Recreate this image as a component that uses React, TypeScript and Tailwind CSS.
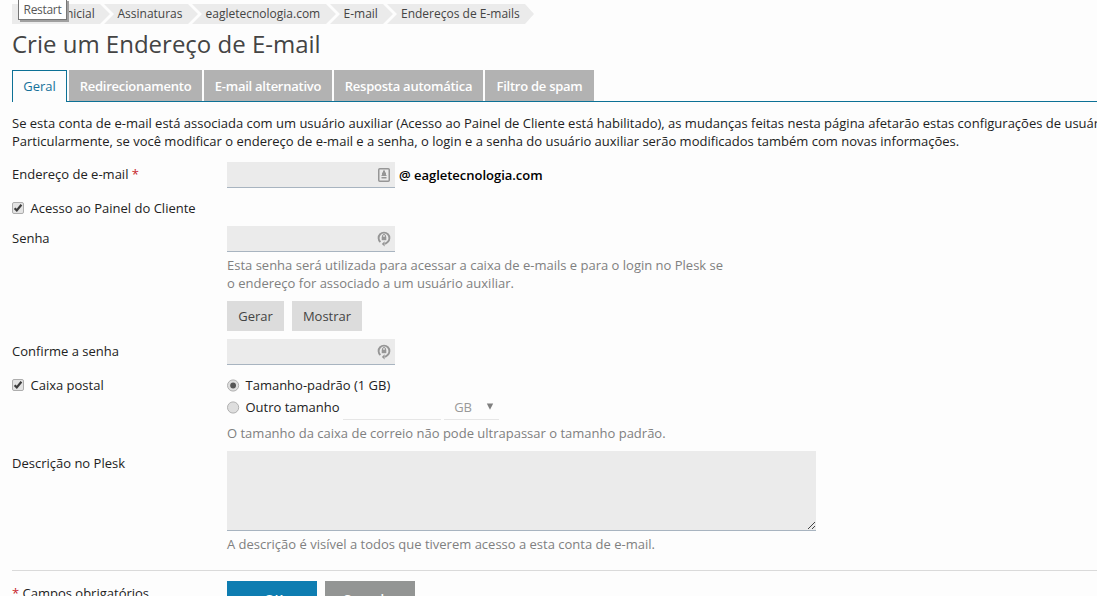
import type { ReactNode } from "react";

function Crumb({ label, className }: { label: string; className: string }) {
  return (
    <li
      className={`h-5 shrink-0 whitespace-nowrap bg-[#ebebeb] text-[12px] leading-5 text-[#444] ${className}`}
    >
      {label}
    </li>
  );
}

function Tab({ label, className }: { label: string; className: string }) {
  return (
    <button
      className={`h-[31px] shrink-0 whitespace-nowrap bg-[#b2b2b2] text-center text-[13px] font-semibold leading-[33px] tracking-[-0.25px] text-white ${className}`}
    >
      {label}
    </button>
  );
}

function Check({ label }: { label: string }) {
  return (
    <label className="flex items-center whitespace-nowrap">
      <svg className="mr-[6.5px]" width="12" height="12" viewBox="0 0 12 12">
        <rect x="0.5" y="0.5" width="11" height="11" rx="1.5" fill="#e3e3e3" stroke="#adadad" />
        <path d="M2.6 6.2 4.8 8.4 9.4 2.8" fill="none" stroke="#3c3c3c" strokeWidth="2.2" />
      </svg>
      {label}
    </label>
  );
}

function Radio({ label, checked }: { label: string; checked?: boolean }) {
  return (
    <label className="flex items-center whitespace-nowrap">
      <svg className="mr-[5.5px]" width="13" height="13" viewBox="0 0 13 13">
        <circle cx="6.1" cy="6.5" r="5.6" fill="#dedede" stroke="#a9a9a9" strokeWidth="0.9" />
        {checked && <circle cx="6.1" cy="6.5" r="2.9" fill="#555" />}
      </svg>
      {label}
    </label>
  );
}

function Field({ children }: { children: ReactNode }) {
  return (
    <div className="flex h-[26px] w-[168px] items-center justify-end border-b border-[#a8b4c0] bg-[#ebebeb] pr-[4px]">
      {children}
    </div>
  );
}

function UserIcon() {
  return (
    <svg width="14" height="16" viewBox="0 0 14 16">
      <rect x="1.75" y="1.75" width="10.5" height="12.5" rx="1" fill="none" stroke="#969696" strokeWidth="1.5" />
      <path d="M6 3.5h2v2H6zM5 5.5h4V8H5zM4.5 8h5v1h-5zM4.5 10h5v1.5h-5z" fill="#969696" />
    </svg>
  );
}

function LockIcon() {
  return (
    <svg width="14" height="17" viewBox="0 0 14 17">
      <path d="M3.4 12A5.4 5.4 0 1 1 10.6 12L8 14" fill="none" stroke="#969696" strokeWidth="1.9" />
      <path d="M7.6 11.3v5.2L4.8 14z" fill="#969696" />
      <path d="M5.5 7V6a1.5 1.5 0 0 1 3 0V7" fill="none" stroke="#969696" strokeWidth="1" />
      <rect x="4.7" y="6.6" width="4.6" height="3.6" fill="#969696" />
    </svg>
  );
}

function Row({ label, className, children }: { label: ReactNode; className: string; children?: ReactNode }) {
  return (
    <div className={`flex items-start ${className}`}>
      <div className="flex h-6 w-[215px] shrink-0 items-center whitespace-nowrap">{label}</div>
      <div>{children}</div>
    </div>
  );
}

export default function App() {
  return (
    <div className="relative h-[596px] w-[1097px] overflow-hidden bg-[#fdfdfd] pl-3 pt-1 font-['Open_Sans',sans-serif] text-[13px] leading-[18px] text-[#222]">
      <ul className="flex h-5">
        <Crumb label="Página Inicial" className="w-[98px] pl-[10px] [clip-path:polygon(0_0,88px_0,100%_50%,88px_100%,0_100%)]" />
        <Crumb label="Assinaturas" className="-ml-[6px] w-[94px] pl-[13.5px] [clip-path:polygon(0_0,84px_0,100%_50%,84px_100%,0_100%,10px_50%)]" />
        <Crumb label="eagletecnologia.com" className="-ml-[6px] w-[144px] pl-[13.5px] [clip-path:polygon(0_0,134px_0,100%_50%,134px_100%,0_100%,10px_50%)]" />
        <Crumb label="E-mail" className="-ml-[6px] w-[63px] pl-[13.5px] [clip-path:polygon(0_0,53px_0,100%_50%,53px_100%,0_100%,10px_50%)]" />
        <Crumb label="Endereços de E-mails" className="-ml-[6px] w-[147px] pl-[14px] [clip-path:polygon(0_0,138px_0,100%_50%,138px_100%,0_100%,10px_50%)]" />
      </ul>

      <h1 className="h-[46px] whitespace-nowrap text-[24px] leading-[39px] text-[#444]">Crie um Endereço de E-mail</h1>

      <nav className="flex h-8 border-b border-[#0d7196]">
        <button className="h-8 w-[55px] border border-b-0 border-[#0d7196] bg-[#fdfdfd] text-center leading-[31px] text-[#16719a]">
          Geral
        </button>
        <Tab label="Redirecionamento" className="ml-[2px] w-[133px]" />
        <Tab label="E-mail alternativo" className="ml-[2px] w-[128px]" />
        <Tab label="Resposta automática" className="ml-[2px] w-[149px]" />
        <Tab label="Filtro de spam" className="ml-[2px] w-[109px]" />
      </nav>

      <p className="mt-3 h-12 whitespace-nowrap">
        Se esta conta de e-mail está associada com um usuário auxiliar (Acesso ao Painel de Cliente está habilitado), as mudanças feitas nesta página afetarão estas configurações de usuário auxiliar.
        <br />
        Particularmente, se você modificar o endereço de e-mail e a senha, o login e a senha do usuário auxiliar serão modificados também com novas informações.
      </p>

      <Row className="h-[37px]" label={<>Endereço de e-mail&nbsp;<span className="text-[#c7252c]">*</span></>}>
        <div className="flex items-center">
          <Field><UserIcon /></Field>
          <span className="ml-1 font-semibold tracking-[-0.02px] text-black">@ eagletecnologia.com</span>
        </div>
      </Row>
      <div className="flex h-[27px] items-start">
        <Check label="Acesso ao Painel do Cliente" />
      </div>
      <Row className="h-[113px]" label="Senha">
        <Field><LockIcon /></Field>
        <p className="mt-1 whitespace-nowrap text-[#808080]">
          Esta senha será utilizada para acessar a caixa de e-mails e para o login no Plesk se<br />
          o endereço for associado a um usuário auxiliar.
        </p>
        <div className="mt-[9px] flex gap-2">
          <button className="h-[30px] w-[57px] bg-[#dcdcdc] text-[#444]">Gerar</button>
          <button className="h-[30px] w-[70px] bg-[#dcdcdc] text-[#444]">Mostrar</button>
        </div>
      </Row>
      <Row className="h-[33px]" label="Confirme a senha">
        <Field><LockIcon /></Field>
      </Row>
      <Row className="h-[79px]" label={<div className="mt-[2px]"><Check label="Caixa postal" /></div>}>
        <div className="flex h-[26px] items-center"><Radio checked label="Tamanho-padrão (1 GB)" /></div>
        <div className="flex h-[22px] items-start">
          <div className="flex h-[18px] items-center"><Radio label="Outro tamanho" /></div>
          <div className="ml-[3.5px] h-[22px] w-[98px] border-b border-[#e6e6e6]" />
          <div className="ml-[3px] flex h-[22px] w-[55px] border-b border-[#e6e6e6] pl-[10px] text-[#999]">
            GB
            <svg className="ml-[14px] mt-[5px]" width="8" height="7" viewBox="0 0 8 7">
              <path d="M0.8 0.5h6.4L4 6.8z" fill="#808080" />
            </svg>
          </div>
        </div>
        <p className="mt-1 whitespace-nowrap text-[#808080]">O tamanho da caixa de correio não pode ultrapassar o tamanho padrão.</p>
      </Row>
      <Row className="h-[119px]" label="Descrição no Plesk">
        <div className="flex h-20 w-[589px] items-end justify-end border-b border-[#a8b4c0] bg-[#ebebeb]">
          <svg width="9" height="9" viewBox="0 0 9 9" shapeRendering="crispEdges">
            <path
              d="M1 7h1v1H1zM2 6h1v1H2zM3 5h1v1H3zM4 4h1v1H4zM5 3h1v1H5zM6 2h1v1H6zM7 1h1v1H7zM5 7h1v1H5zM6 6h1v1H6zM7 5h1v1H7z"
              fill="#444"
            />
          </svg>
        </div>
        <p className="mt-1 whitespace-nowrap text-[#808080]">A descrição é visível a todos que tiverem acesso a esta conta de e-mail.</p>
      </Row>
      <footer className="flex border-t border-[#dadada] pt-[10px]">
        <div className="w-[215px] shrink-0 pt-[3px]"><span className="text-[#c7252c]">*</span> Campos obrigatórios</div>
        <button className="h-[35px] w-[90px] bg-[#0e7db1] pl-[3px] font-semibold text-white">OK</button>
        <button className="ml-2 h-[35px] w-[90px] bg-[#939594] font-semibold text-white">Cancelar</button>
      </footer>

      <div className="absolute left-[18px] top-[-1px] h-[21px] w-[49px] border border-[#767676] bg-white text-center text-[12px] leading-[20px] tracking-[-0.3px] text-[#575757] shadow-[2px_2px_0_#a0a0a0]">
        Restart
      </div>
    </div>
  );
}
